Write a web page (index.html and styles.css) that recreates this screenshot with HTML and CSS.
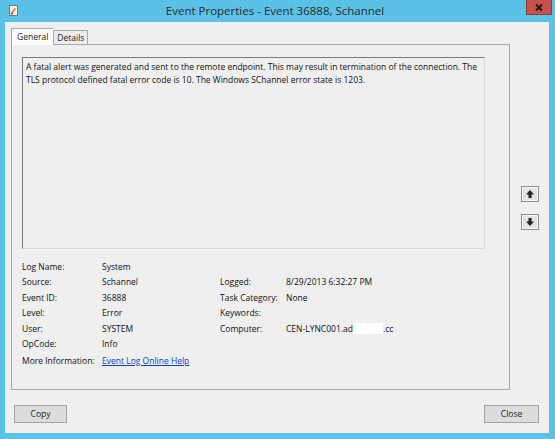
FILE: index.html
```html
<!DOCTYPE html>
<html>
<head>
<meta charset="utf-8">
<link rel="stylesheet" href="styles.css">
</head>
<body>
<div class="window">
  <div class="titlebar">
    <svg class="app-icon" width="9" height="11" viewBox="0 0 9 11">
      <rect x="0.5" y="0.5" width="8" height="10" fill="#f4f1e8" stroke="#7a7a7a"/>
      <path d="M2 7.5 L6 3 L7 4 L3 8.5 Z" fill="#e07b1f"/>
      <rect x="2" y="8" width="2" height="1.5" fill="#c0392b"/>
    </svg>
    <div class="title">Event Properties - Event 36888, Schannel</div>
    <div class="close-btn">
      <svg width="8" height="7" viewBox="0 0 8 7"><path d="M1 0.5 L7 6.5 M7 0.5 L1 6.5" stroke="#1a1a1a" stroke-width="2"/></svg>
    </div>
  </div>
  <div class="client">
    <div class="main">
      <div class="left">
        <div class="tabs">
          <div class="tab selected">General</div>
          <div class="tab">Details</div>
        </div>
        <div class="panel">
          <div class="desc">A fatal alert was generated and sent to the remote endpoint. This may result in termination of the connection. The TLS protocol defined fatal error code is 10. The Windows SChannel error state is 1203.</div>
          <div class="fields">
            <div class="lbl">Log Name:</div><div class="val">System</div><div></div><div></div>
            <div class="lbl">Source:</div><div class="val">Schannel</div><div class="lbl">Logged:</div><div class="val">8/29/2013 6:32:27 PM</div>
            <div class="lbl">Event ID:</div><div class="val">36888</div><div class="lbl">Task Category:</div><div class="val">None</div>
            <div class="lbl">Level:</div><div class="val">Error</div><div class="lbl">Keywords:</div><div class="val"></div>
            <div class="lbl">User:</div><div class="val">SYSTEM</div><div class="lbl">Computer:</div><div class="val">CEN-LYNC001.ad<span class="redact"></span>.cc</div>
            <div class="lbl">OpCode:</div><div class="val">Info</div><div></div><div></div>
            <div class="lbl more">More Information:</div><div class="val more wide"><a class="link" href="#">Event Log Online Help</a></div>
          </div>
        </div>
      </div>
      <div class="arrows">
        <div class="arrow-btn">
          <svg width="10" height="10" viewBox="0 0 10 10"><path d="M5 1 L9 5.5 L6.5 5.5 L6.5 9 L3.5 9 L3.5 5.5 L1 5.5 Z" fill="#222"/></svg>
        </div>
        <div class="arrow-btn">
          <svg width="10" height="10" viewBox="0 0 10 10"><path d="M5 9 L9 4.5 L6.5 4.5 L6.5 1 L3.5 1 L3.5 4.5 L1 4.5 Z" fill="#222"/></svg>
        </div>
      </div>
    </div>
    <div class="buttons">
      <div class="btn">Copy</div>
      <div class="btn">Close</div>
    </div>
  </div>
</div>
</body>
</html>
```
FILE: styles.css
```css
* { box-sizing: border-box; }
html, body { margin: 0; padding: 0; }
body {
  width: 555px;
  height: 439px;
  background: #5ac2e6;
  font-family: "Open Sans", "Noto Sans", sans-serif;
  font-size: 8.5px;
  color: #111;
  overflow: hidden;
}
.window {
  width: 555px;
  height: 439px;
  display: flex;
  flex-direction: column;
}
.titlebar {
  height: 22px;
  display: flex;
  align-items: flex-start;
}
.app-icon { margin: 5px 0 0 9px; }
.title {
  flex: 1;
  text-align: center;
  font-size: 11.5px;
  line-height: 22px;
  color: #2a2a2a;
  padding-left: 6px;
}
.close-btn {
  width: 26px;
  height: 15px;
  margin-right: 3px;
  background: #c6504a;
  border: 1px solid #8e3a36;
  border-top: none;
  display: flex;
  align-items: center;
  justify-content: center;
}
.client {
  flex: 1;
  margin: 0 6px 6px 5px;
  background: #efefef;
  display: flex;
  flex-direction: column;
  padding: 6px 10px 10px 6px;
}
.main {
  display: flex;
  align-items: flex-start;
}
.left {
  width: 499px;
  display: flex;
  flex-direction: column;
}
.tabs {
  display: flex;
  align-items: flex-end;
  height: 16px;
  position: relative;
  z-index: 1;
}
.tab {
  height: 14px;
  padding: 0 3px;
  border: 1px solid #a9a9a9;
  border-bottom: none;
  background: #ececec;
  line-height: 13px;
  font-size: 8.5px;
  color: #222;
}
.tab.selected {
  height: 17px;
  margin-bottom: -1px;
  background: #fcfcfc;
  padding: 0 5px;
  line-height: 15px;
  border-right: none;
}
.panel {
  height: 346px;
  border: 1px solid #a9a9a9;
  background: #efefef;
  padding: 12px 24px 0 10px;
}
.desc {
  height: 192px;
  border-top: 1px solid #7c7c7c;
  border-left: 1px solid #7c7c7c;
  border-right: 1px solid #dadada;
  border-bottom: 1px solid #dadada;
  padding: 2px 3px;
  line-height: 13px;
  background: #efefef;
}
.fields {
  margin-top: 10px;
  display: grid;
  grid-template-columns: 80px 118px 66px 1fr;
  grid-auto-rows: 15.5px;
  align-items: center;
  line-height: 12px;
}
.lbl, .val { white-space: nowrap; }
.more { margin-top: 2px; }
.wide { grid-column: span 3; }
.link { color: #0b3dd6; text-decoration: underline; }
.redact {
  display: inline-block;
  width: 30px;
  height: 11px;
  background: #ffffff;
  vertical-align: -2px;
}
.arrows {
  margin-left: 11px;
  margin-top: 158px;
  display: flex;
  flex-direction: column;
  gap: 12px;
}
.arrow-btn {
  width: 18px;
  height: 16px;
  border: 1px solid #8e8e8e;
  background: #e3e3e3;
  box-shadow: inset 0 0 0 1px #f8f8f8;
  display: flex;
  align-items: center;
  justify-content: center;
}
.buttons {
  margin-top: auto;
  display: flex;
  justify-content: space-between;
  padding-left: 3px;
}
.btn {
  width: 53px;
  height: 18px;
  border: 1px solid #a3a3a3;
  background: #dcdcdc;
  text-align: center;
  line-height: 16px;
  font-size: 8.5px;
  color: #222;
}
.btn:last-child { width: 55px; }
```
